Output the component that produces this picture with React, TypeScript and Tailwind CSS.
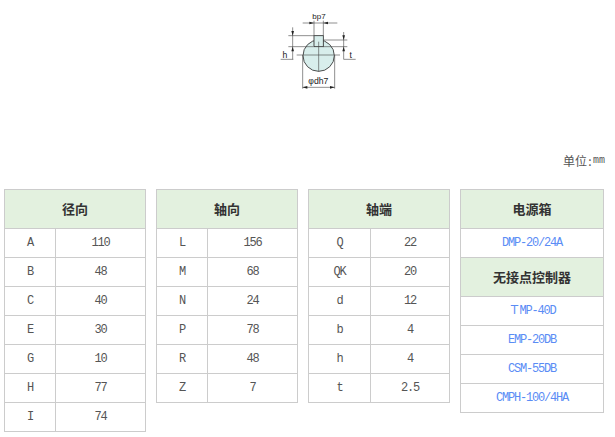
const mono = "font-['Liberation_Mono','Noto_Sans_CJK_SC',monospace] text-[12px] tracking-[-1.2px]";

function Head({ children, h = "h-[39px]" }: { children: string; h?: string }) {
  return (
    <div className={`${h} flex items-center justify-center border-b border-[#cccccc] bg-[#e3f1df] text-[13px] font-bold text-[#333333] font-['Noto_Sans_CJK_SC',sans-serif]`}>
      {children}
    </div>
  );
}

function SpecTable({ title, cols, rows }: { title: string; cols: string; rows: [string, string][] }) {
  return (
    <div className="w-[142px] border-x border-t border-[#cccccc]">
      <Head>{title}</Head>
      {rows.map(([k, v]) => (
        <div key={k} className={`grid h-[29px] border-b border-[#cccccc] text-[#555555] ${cols} ${mono}`}>
          <div className="flex items-center justify-center border-r border-[#cccccc]">{k}</div>
          <div className="flex items-center justify-center">{v}</div>
        </div>
      ))}
    </div>
  );
}

function Link({ children }: { children: string }) {
  return (
    <div className={`flex h-[29px] items-center justify-center border-b border-[#cccccc] text-[#5a8cf5] ${mono}`}>
      {children}
    </div>
  );
}

function Diagram() {
  return (
    <svg viewBox="0 0 330 300" className="ml-[260px] block h-[100px] w-[110px]">
      <circle cx="176" cy="167" r="47" fill="#d8eeec" stroke="#333" strokeWidth="2.6" />
      <rect x="162" y="107" width="28" height="33" fill="#d8eeec" stroke="#333" strokeWidth="2.6" />
      <g stroke="#444" strokeWidth="1.8" fill="none">
        <path d="M128 69H232M162 62V107M190 62V107" />
        <path d="M85 107H162M85 140H160M98 82V178M62 178H100" />
        <path d="M190 120H262M190 140H262M251 96V178H287" />
        <path d="M110 165H240M176 125V215" />
        <path d="M128 165V266M224 165V266M128 262H224" />
      </g>
      <g fill="#222">
        <path d="M162 69l-14-4v8zM190 69l14-4v8z" />
        <path d="M98 107l-4-14h8zM98 140l-4 14h8z" />
        <path d="M251 120l-4-14h8zM251 140l-4 14h8z" />
        <path d="M128 262l14-4v8zM224 262l-14-4v8z" />
      </g>
      <g fill="#222" fontFamily="'Liberation Sans',sans-serif" fontSize="26" textAnchor="middle">
        <text x="177" y="57" fontSize="24">bp7</text>
        <text x="75" y="173">h</text>
        <text x="272" y="173">t</text>
        <text x="175" y="252">φdh7</text>
      </g>
    </svg>
  );
}

export default function App() {
  return (
    <div className="h-[437px] w-[615px] overflow-hidden bg-white">
      <Diagram />
      <div className="mt-[53px] flex h-[16px] items-center justify-end pr-[10px] text-[12px] leading-none text-[#555555] font-['Noto_Sans_CJK_SC',sans-serif]">
        单位<span className="w-[6px] text-center">:</span><span className="font-['Liberation_Mono',monospace] text-[10px] tracking-[0px]">mm</span>
      </div>
      <div className="mt-[20px] flex items-start gap-[10px] pl-[4px]">
        <SpecTable title="径向" cols="grid-cols-[51px_1fr]" rows={[["A","110"],["B","48"],["C","40"],["E","30"],["G","10"],["H","77"],["I","74"]]} />
        <SpecTable title="轴向" cols="grid-cols-[51px_1fr]" rows={[["L","156"],["M","68"],["N","24"],["P","78"],["R","48"],["Z","7"]]} />
        <SpecTable title="轴端" cols="grid-cols-[62px_1fr]" rows={[["Q","22"],["QK","20"],["d","12"],["b","4"],["h","4"],["t","2.5"]]} />
        <div className="w-[144px] border-x border-t border-[#cccccc]">
          <Head>电源箱</Head>
          <Link>DMP-20/24A</Link>
          <Head>无接点控制器</Head>
          <Link>ＴMP-40D</Link>
          <Link>EMP-20DB</Link>
          <Link>CSM-55DB</Link>
          <Link>CMPH-100/4HA</Link>
        </div>
      </div>
    </div>
  );
}
